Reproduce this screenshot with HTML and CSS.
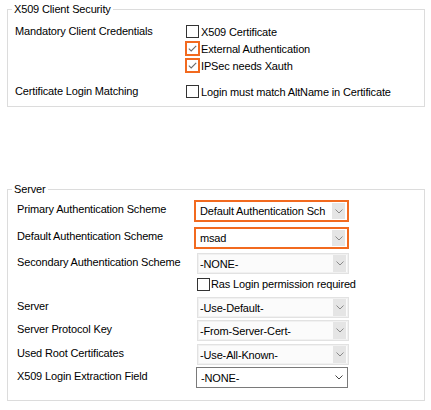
FILE: index.html
```html
<!DOCTYPE html>
<html>
<head>
<meta charset="utf-8">
<title>X509 Client Security</title>
<link rel="stylesheet" href="styles.css">
</head>
<body>
<div class="page">
  <fieldset class="group g1">
    <legend>X509 Client Security</legend>
    <div class="frow">
      <div class="flabel">Mandatory Client Credentials</div>
      <div class="checks">
        <div class="chk"><span class="box"></span><span>X509 Certificate</span></div>
        <div class="chk"><span class="box hl"><svg width="11" height="11" viewBox="0 0 11 11"><path d="M1.8 5.6 L4.2 8 L9.2 2.8" fill="none" stroke="#6b6b6b" stroke-width="1.1"/></svg></span><span>External Authentication</span></div>
        <div class="chk"><span class="box hl"><svg width="11" height="11" viewBox="0 0 11 11"><path d="M1.8 5.6 L4.2 8 L9.2 2.8" fill="none" stroke="#6b6b6b" stroke-width="1.1"/></svg></span><span>IPSec needs Xauth</span></div>
      </div>
    </div>
    <div class="frow r4">
      <div class="flabel">Certificate Login Matching</div>
      <div class="checks">
        <div class="chk"><span class="box"></span><span>Login must match AltName in Certificate</span></div>
      </div>
    </div>
  </fieldset>

  <fieldset class="group g2">
    <legend>Server</legend>
    <div class="srow s1">
      <div class="slabel">Primary Authentication Scheme</div>
      <div class="combo hlc"><span class="val">Default Authentication Sch</span><span class="arrow"><svg width="8" height="5" viewBox="0 0 8 5"><path d="M0.5 0.5 L4 4 L7.5 0.5" fill="none" stroke="#8a8a8a" stroke-width="1"/></svg></span></div>
    </div>
    <div class="srow s2">
      <div class="slabel">Default Authentication Scheme</div>
      <div class="combo hlc"><span class="val">msad</span><span class="arrow"><svg width="8" height="5" viewBox="0 0 8 5"><path d="M0.5 0.5 L4 4 L7.5 0.5" fill="none" stroke="#8a8a8a" stroke-width="1"/></svg></span></div>
    </div>
    <div class="srow s3">
      <div class="slabel">Secondary Authentication Scheme</div>
      <div class="combo"><span class="val">-NONE-</span><span class="arrow"><svg width="8" height="5" viewBox="0 0 8 5"><path d="M0.5 0.5 L4 4 L7.5 0.5" fill="none" stroke="#8a8a8a" stroke-width="1"/></svg></span></div>
    </div>
    <div class="srow ras">
      <div class="slabel"></div>
      <div class="chk rchk"><span class="box"></span><span>Ras Login permission required</span></div>
    </div>
    <div class="srow s4">
      <div class="slabel">Server</div>
      <div class="combo"><span class="val">-Use-Default-</span><span class="arrow"><svg width="8" height="5" viewBox="0 0 8 5"><path d="M0.5 0.5 L4 4 L7.5 0.5" fill="none" stroke="#8a8a8a" stroke-width="1"/></svg></span></div>
    </div>
    <div class="srow s5">
      <div class="slabel">Server Protocol Key</div>
      <div class="combo"><span class="val">-From-Server-Cert-</span><span class="arrow"><svg width="8" height="5" viewBox="0 0 8 5"><path d="M0.5 0.5 L4 4 L7.5 0.5" fill="none" stroke="#8a8a8a" stroke-width="1"/></svg></span></div>
    </div>
    <div class="srow s6">
      <div class="slabel">Used Root Certificates</div>
      <div class="combo"><span class="val">-Use-All-Known-</span><span class="arrow"><svg width="8" height="5" viewBox="0 0 8 5"><path d="M0.5 0.5 L4 4 L7.5 0.5" fill="none" stroke="#8a8a8a" stroke-width="1"/></svg></span></div>
    </div>
    <div class="srow s7">
      <div class="slabel">X509 Login Extraction Field</div>
      <div class="combo dark"><span class="val">-NONE-</span><span class="arrow"><svg width="8" height="5" viewBox="0 0 8 5"><path d="M0.5 0.5 L4 4 L7.5 0.5" fill="none" stroke="#444" stroke-width="1"/></svg></span></div>
    </div>
  </fieldset>
</div>
</body>
</html>
```

FILE: styles.css
```css
* { box-sizing: border-box; }
html, body { margin: 0; background: #fff; }
body {
  font-family: "Liberation Sans", Arial, sans-serif;
  font-size: 11px;
  letter-spacing: -0.15px;
  color: #000;
  width: 431px;
  height: 410px;
  overflow: hidden;
}
.page { padding: 2px 0 0 7px; }

.group {
  margin: 0;
  width: 418px;
  min-width: 0;
  border: 1px solid #dcdcdc;
}
.group legend {
  padding: 0 2px;
  line-height: 14px;
}
.g1 { padding: 7px 0 6px 7px; }
.g1 legend { margin-left: -3px; }
.g2 { margin-top: 75px; padding: 4px 0 12px 9px; }
.g2 legend { margin-left: -5px; }

/* group 1 */
.frow { display: flex; align-items: flex-start; }
.r4 { margin-top: 9px; }
.flabel { width: 171px; line-height: 17px; flex: none; }
.checks { display: flex; flex-direction: column; }
.chk {
  display: flex;
  align-items: center;
  gap: 2px;
  height: 17px;
  white-space: nowrap;
}
.box {
  width: 13px;
  height: 13px;
  flex: none;
  border: 1px solid #333;
  background: #fff;
  display: flex;
}
.box.hl {
  border-color: #f26a1f;
  outline: 1px solid #f26a1f;
}

/* group 2 */
.srow { display: flex; align-items: flex-start; }
.slabel { width: 179px; flex: none; padding-top: 2px; line-height: 14px; }
.s2 { margin-top: 5px; }
.s3 { margin-top: 4px; }
.ras { margin-top: 3px; }
.rchk { height: 14px; gap: 1px; margin-left: 1px; }
.s4 { margin-top: 6px; }
.s5 { margin-top: 2px; }
.s6 { margin-top: 3px; }
.s7 { margin-top: 2px; }

.combo {
  display: flex;
  align-items: center;
  width: 152px;
  height: 21px;
  margin-left: 1px;
  padding: 1px 2px 1px 2px;
  border: 1px solid #e2e2e2;
  background: #fbfbfb;
  box-shadow: inset 0 0 0 1px #f1f1f1;
  white-space: nowrap;
}
.combo .val { flex: 1; overflow: hidden; }
.combo .arrow {
  width: 13px;
  align-self: stretch;
  background: #e5e5e5;
  display: flex;
  align-items: center;
  justify-content: center;
  flex: none;
}
.combo.hlc {
  margin-left: -2px;
  width: 155px;
  height: 22px;
  border: 2px solid #f26a1f;
  background: #fff;
  box-shadow: none;
  padding: 1px 2px 1px 4px;
}
.combo.dark {
  margin-left: 0;
  border-color: #7a7a7a;
  background: #fff;
  box-shadow: none;
  padding-left: 4px;
}
.combo.dark .arrow { background: transparent; }
```
